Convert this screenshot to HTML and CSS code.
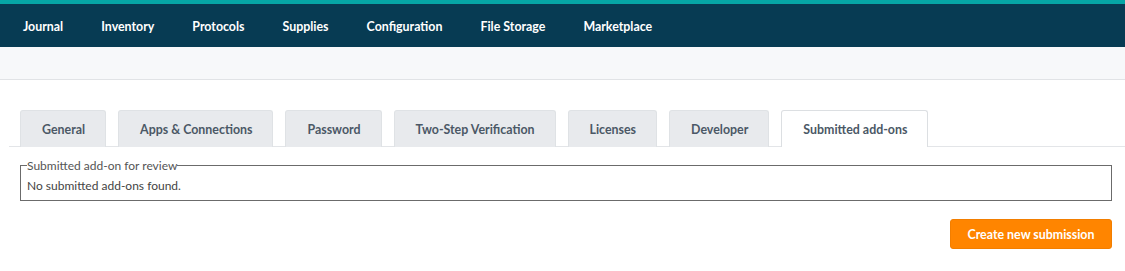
FILE: index.html
```html
<!DOCTYPE html>
<html>
<head>
<meta charset="utf-8">
<link rel="stylesheet" href="styles.css">
</head>
<body>
<div class="topline"></div>
<nav class="nav">
  <a class="nav-item">Journal</a>
  <a class="nav-item">Inventory</a>
  <a class="nav-item">Protocols</a>
  <a class="nav-item">Supplies</a>
  <a class="nav-item">Configuration</a>
  <a class="nav-item">File Storage</a>
  <a class="nav-item">Marketplace</a>
</nav>
<div class="subbar"></div>
<main class="content">
  <ul class="tabs">
    <li class="tab">General</li>
    <li class="tab">Apps &amp; Connections</li>
    <li class="tab">Password</li>
    <li class="tab">Two-Step Verification</li>
    <li class="tab">Licenses</li>
    <li class="tab">Developer</li>
    <li class="tab active">Submitted add-ons</li>
  </ul>
  <div class="panel">
    <fieldset class="box">
      <legend class="box-legend">Submitted add-on for review</legend>
      <div class="box-text">No submitted add-ons found.</div>
    </fieldset>
    <div class="actions">
      <button class="btn">Create new submission</button>
    </div>
  </div>
</main>
</body>
</html>
```
FILE: styles.css
```css
* { box-sizing: border-box; }
body {
  margin: 0;
  font-family: Lato, "Open Sans", sans-serif;
  font-size: 13px;
  background: #fff;
}
.topline { height: 4px; background: #06a6a6; }
.nav {
  height: 43px;
  background: #073b53;
  display: flex;
  align-items: center;
  padding-left: 4px;
  padding-top: 1px;
}
.nav-item {
  color: #fff;
  font-weight: 700;
  font-size: 12.4px;
  padding: 0 19px;
}
.subbar {
  height: 33px;
  background: #f7f8fa;
  border-bottom: 1px solid #e1e3e6;
}
.content { padding: 30px 0 0 9px; }
.tabs {
  list-style: none;
  margin: 0;
  padding: 0 0 0 11px;
  display: flex;
  gap: 12px;
  border-bottom: 1px solid #e3e5e8;
}
.tab {
  height: 37px;
  margin-bottom: -1px;
  padding: 0 20px 0 21px;
  display: flex;
  align-items: center;
  background: #e8eaed;
  border: 1px solid #dfe2e5;
  border-bottom: none;
  border-radius: 3px 3px 0 0;
  color: #4b5866;
  font-weight: 700;
  font-size: 12.4px;
}
.tab.active {
  background: #fff;
  border-color: #dcdfe2;
}
.panel { padding: 11px 13px 0 11px; }
.box {
  margin: 0;
  padding: 0 6px 7px 6px;
  border: 1px solid #6b6b6b;
}
.box-legend {
  padding: 0;
  color: #555;
  font-size: 12px;
}
.box-text {
  color: #444;
  font-size: 12px;
  padding-top: 5px;
}
.actions {
  display: flex;
  justify-content: flex-end;
  margin-top: 18px;
}
.btn {
  height: 30px;
  width: 162px;
  background: #ff8500;
  border: 1px solid #f27e00;
  border-radius: 3px;
  color: #fff;
  font-family: inherit;
  font-weight: 700;
  font-size: 12.4px;
}
```
